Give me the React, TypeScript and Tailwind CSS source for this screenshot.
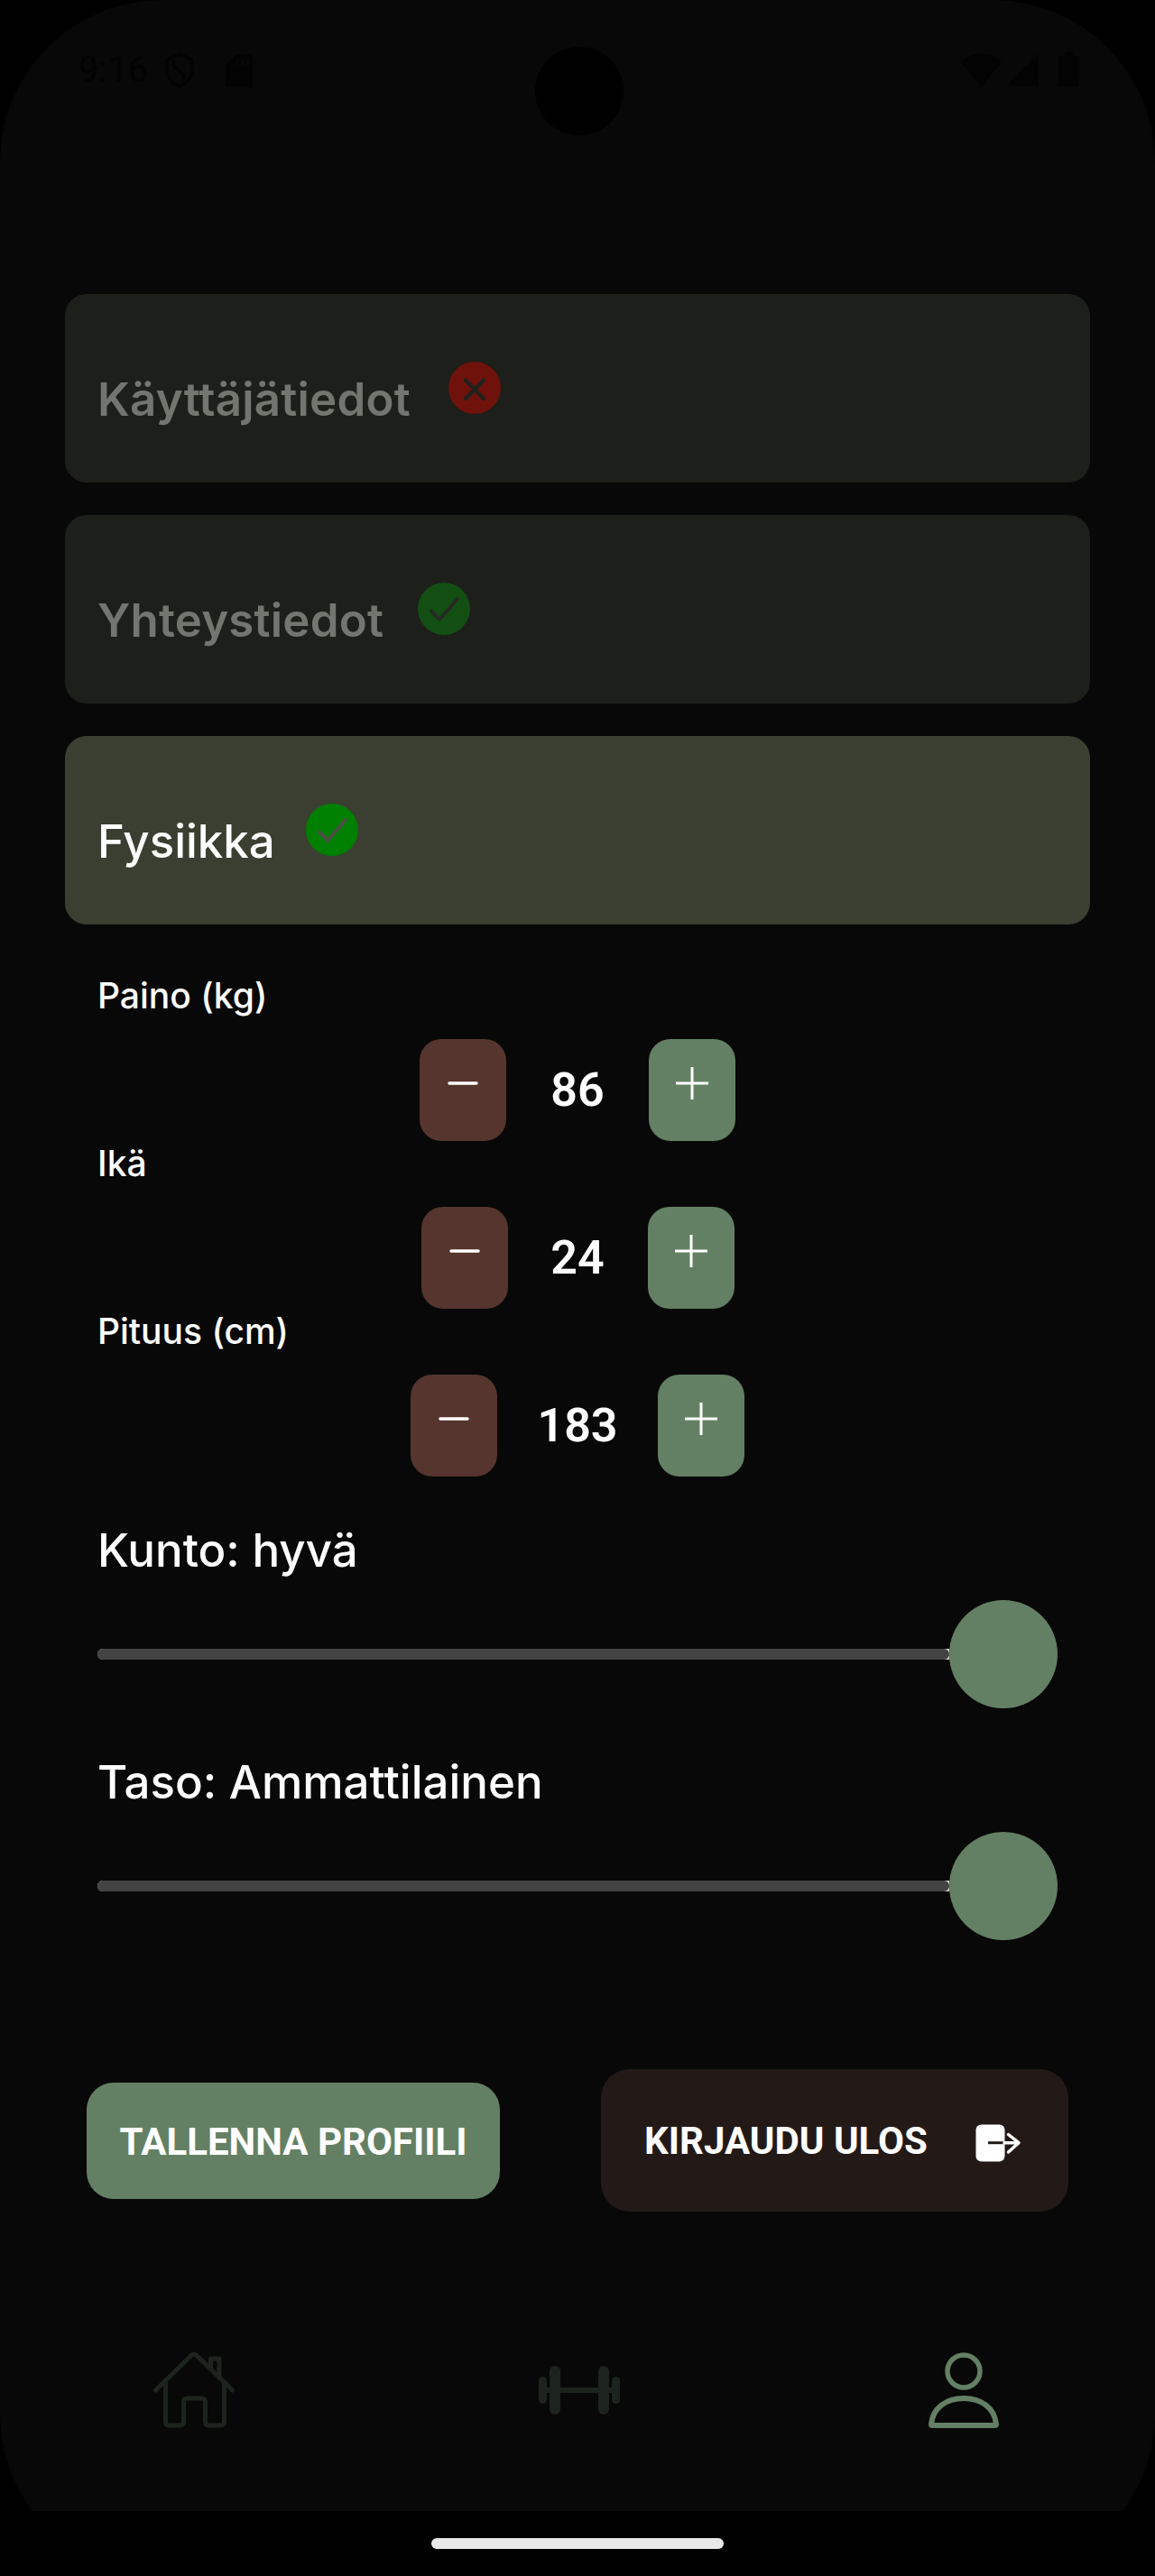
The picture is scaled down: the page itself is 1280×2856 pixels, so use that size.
import React from "react";

const GREEN = "#648064";

function Check({ dim }: { dim?: boolean }) {
  return (
    <svg width="58" height="58" viewBox="0 0 58 58" className={dim ? "mb-[1px] ml-[38px] shrink-0" : "mb-[1px] ml-[34px] shrink-0"}>
      <circle cx="29" cy="29" r="29" fill={dim ? "#134f13" : "#008000"} />
      <path d="M15 31.5 L24 41 L44 18" fill="none" stroke={dim ? "#262a22" : "#4a4d45"} strokeWidth="4" strokeLinecap="round" strokeLinejoin="round" />
    </svg>
  );
}

function Cross() {
  return (
    <svg width="58" height="58" viewBox="0 0 58 58" className="mb-[1px] ml-[42px] shrink-0">
      <circle cx="29" cy="29" r="29" fill="#70120c" />
      <path d="M19 20.5 L39 41 M39 20.5 L19 41" fill="none" stroke="#22211c" strokeWidth="4.5" strokeLinecap="round" />
    </svg>
  );
}

function Section({ title, active, children }: { title: string; active?: boolean; children: React.ReactNode }) {
  return (
    <div className={active ? "mx-[72px] flex h-[209px] items-center rounded-[24px] bg-[#3b3f31] pl-[36px]" : "mx-[72px] mb-[36px] flex h-[209px] items-center rounded-[24px] bg-[#1d1f1a] pl-[36px]"}>
      <span className={active ? "pt-[25px] text-[51px] leading-[62px] font-medium text-white" : "pt-[25px] text-[51px] leading-[62px] font-semibold tracking-[0.2px] text-[#73756f]"}>{title}</span>
      {children}
    </div>
  );
}

function Stepper({ value, widthClass }: { value: string; widthClass: string }) {
  return (
    <div className="flex h-[113px] items-center justify-center">
      <button className="flex h-[113px] w-[96px] items-start justify-center rounded-[24px] bg-[#55352e]">
        <svg width="36" height="36" viewBox="0 0 36 36" className="mt-[31px]">
          <path d="M3 18 H33" stroke="#fff" strokeWidth="3.5" strokeLinecap="round" />
        </svg>
      </button>
      <span className={widthClass + " text-center font-['Roboto'] text-[52px] leading-[60px] font-semibold text-white"}>{value}</span>
      <button className="flex h-[113px] w-[96px] items-start justify-center rounded-[24px] bg-[#648064]">
        <svg width="36" height="36" viewBox="0 0 36 36" className="mt-[31px]">
          <path d="M0.5 18 H35.5 M18 0.5 V35.5" stroke="#fff" strokeWidth="3" strokeLinecap="round" />
        </svg>
      </button>
    </div>
  );
}

function Slider() {
  return (
    <div className="mx-[108px] flex h-[120px] items-center">
      <div className="h-[12px] flex-1 rounded-l-[6px] bg-[#cfcfcf]">
        <div className="h-[12px] rounded-[6px] bg-[#434343]" />
      </div>
      <div className="h-[120px] w-[120px] rounded-full bg-[#648064]" />
    </div>
  );
}

export default function App() {
  return (
    <div className="h-[2856px] w-[1280px] bg-black font-['Inter',sans-serif]">
      <div className="flex h-[2856px] flex-col overflow-hidden rounded-[180px] bg-[#080808]">
        {/* status bar */}
        <div className="flex h-[326px] shrink-0 items-start pt-[52px]">
          <div className="flex flex-1 items-center pt-[6px] pl-[87px]">
            <span className="w-[76px] font-['Roboto'] text-[40px] leading-[40px] text-[#030303]">9:16</span>
            <svg width="32" height="40" viewBox="0 0 32 40" className="ml-[20px]">
              <path d="M16 2 L30 8 V20 C30 28 24 35 16 38 C8 35 2 28 2 20 V8 Z" fill="none" stroke="#030303" strokeWidth="3.5" strokeLinejoin="round" />
              <path d="M10 8 C8 14 10 17 16 21 C21 25 22 27 20 32" fill="none" stroke="#030303" strokeWidth="3" />
            </svg>
            <svg width="30" height="37" viewBox="0 0 30 37" className="ml-[35px]">
              <path d="M12 0 H26 Q30 0 30 4 V33 Q30 37 26 37 H4 Q0 37 0 33 V12 Z" fill="#030303" />
              <path d="M13 5 V13 M19 5 V13 M25 5 V13" stroke="#080808" strokeWidth="2.5" />
            </svg>
          </div>
          <div className="h-[98px] w-[98px] shrink-0 rounded-full bg-black" />
          <div className="flex flex-1 items-center justify-end pt-[6px] pr-[84px]">
            <svg width="45" height="37" viewBox="0 0 45 37">
              <path d="M0 10 C12 -3 33 -3 45 10 L22.5 37 Z" fill="#030303" />
            </svg>
            <svg width="36" height="36" viewBox="0 0 36 36" className="ml-[5px]">
              <path d="M36 0 V36 H0 Z" fill="#030303" />
            </svg>
            <svg width="23" height="38" viewBox="0 0 23 38" className="ml-[22px]">
              <path d="M7 4 V2 Q7 0 9 0 H14 Q16 0 16 2 V4 H20 Q23 4 23 7 V35 Q23 38 20 38 H3 Q0 38 0 35 V7 Q0 4 3 4 Z" fill="#030303" />
            </svg>
          </div>
        </div>

        {/* sections */}
        <Section title="Käyttäjätiedot">
          <Cross />
        </Section>
        <Section title="Yhteystiedot">
          <Check dim />
        </Section>
        <Section title="Fysiikka" active>
          <Check />
        </Section>

        {/* steppers */}
        <div className="mt-[54px] flex flex-col">
          <label className="h-[73px] pl-[108px] text-[39px] leading-[50px] font-medium text-white">Paino (kg)</label>
          <Stepper value="86" widthClass="w-[158px]" />
          <label className="h-[73px] pl-[108px] text-[39px] leading-[50px] font-medium text-white">Ikä</label>
          <Stepper value="24" widthClass="w-[155px]" />
          <label className="h-[73px] pl-[108px] text-[39px] leading-[50px] font-medium text-white">Pituus (cm)</label>
          <Stepper value="183" widthClass="w-[178px]" />
        </div>

        {/* sliders */}
        <div className="flex h-[137px] items-end pb-[24px] pl-[108px] text-[51px] leading-[62px] font-medium text-white">Kunto: hyvä</div>
        <Slider />
        <div className="flex h-[137px] items-end pb-[24px] pl-[108px] text-[51px] leading-[62px] font-medium text-white">Taso: Ammattilainen</div>
        <Slider />

        {/* actions */}
        <div className="mt-[143px] flex items-center justify-between px-[96px]">
          <button className="flex h-[129px] w-[458px] items-center justify-center rounded-[30px] bg-[#648064] pt-[2px] font-['Roboto'] text-[42px] font-bold text-white">
            TALLENNA PROFIILI
          </button>
          <button className="flex h-[158px] w-[518px] items-center rounded-[32px] bg-[#231a17] pr-[34px] pl-[48px] font-['Roboto'] text-[42px] font-bold text-white">
            <span>KIRJAUDU ULOS</span>
            <svg width="90" height="80" viewBox="0 0 90 80" className="ml-auto">
              <rect x="21.5" y="22.5" width="32" height="41" rx="6" fill="#fff" />
              <path d="M35 42.7 H53" stroke="#231a17" strokeWidth="3" />
              <path d="M53 42.7 H68 M57.5 33.5 L69 42.7 L57.5 53" fill="none" stroke="#fff" strokeWidth="3.5" strokeLinecap="round" strokeLinejoin="round" />
            </svg>
          </button>
        </div>

        {/* tab bar */}
        <div className="mt-[138px] flex items-start pl-[150px]">
          <svg width="130" height="120" viewBox="0 0 130 120">
            <path
              d="M22.5 60 L62 21.5 Q65 19 68 21.5 L107.5 60 M33.5 51 V95 Q33.5 99 37.5 99 H50 Q53.5 99 53.5 95 V73 Q53.5 69 57.5 69 H73.5 Q77.5 69 77.5 73 V95 Q77.5 99 81.5 99 H94.5 Q98.5 99 98.5 95 V51 M83.5 36 V25 H93 V46"
              fill="none"
              stroke="#1c241d"
              strokeWidth="5"
              strokeLinecap="round"
              strokeLinejoin="round"
            />
          </svg>
          <svg width="90" height="54" viewBox="0 0 90 54" className="mt-[33px] ml-[317px]">
            <g fill="#1c241d">
              <rect x="0" y="12" width="9" height="30" rx="4.5" />
              <rect x="12" y="0" width="12" height="54" rx="6" />
              <rect x="9" y="24" width="72" height="6" />
              <rect x="66" y="0" width="12" height="54" rx="6" />
              <rect x="81" y="12" width="9" height="30" rx="4.5" />
            </g>
          </svg>
          <svg width="78" height="84" viewBox="0 0 78 84" className="mt-[18px] ml-[342px]">
            <circle cx="39" cy="21" r="18" fill="none" stroke={GREEN} strokeWidth="5.5" />
            <path d="M3 79.5 C5 61 20 51 39 51 C58 51 73 61 75 79.5 Q75 81 73.5 81 H4.5 Q3 81 3 79.5 Z" fill="none" stroke={GREEN} strokeWidth="6" strokeLinejoin="round" />
          </svg>
        </div>

        {/* gesture bar */}
        <div className="mt-auto flex h-[72px] shrink-0 justify-center bg-black pt-[30px]">
          <div className="h-[12px] w-[324px] rounded-full bg-[#e8e8e8]" />
        </div>
      </div>
    </div>
  );
}
